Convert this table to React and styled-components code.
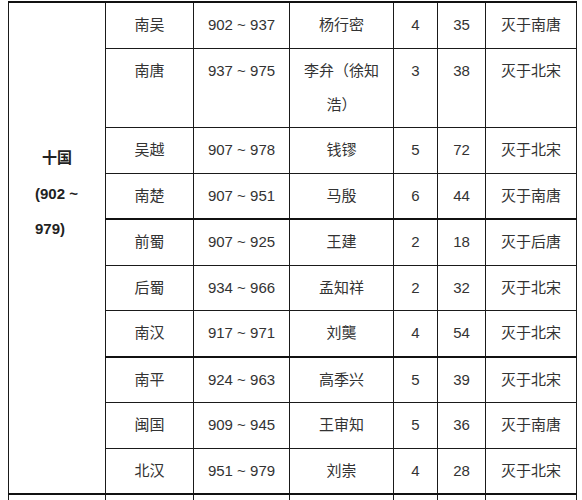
import React from "react";
import styled, { createGlobalStyle } from "styled-components";

const GlobalStyle = createGlobalStyle`
  body {
    margin: 1px 0 0 8px;
    background: #fff;
    font-family: "Liberation Sans", "Noto Sans CJK SC", sans-serif;
  }
`;

const Table = styled.table`
  border-collapse: collapse;
  table-layout: fixed;
  width: 568px;
  border-top: 2px solid #111;
  color: #333;
  font-size: 15px;
`;

const Row = styled.tr`
  & > td {
    border-top: ${(p) => (p.$sep ? "2px solid #111" : "1px solid #222")};
  }
`;

const Cell = styled.td`
  border: 1px solid #1a1a1a;
  text-align: center;
  vertical-align: top;
  padding: 5px 6px 5.5px;
  line-height: 34px;
  white-space: normal;
`;

const RegionCell = styled.td`
  border: 1px solid #1a1a1a;
  border-bottom: 2px solid #111;
  vertical-align: top;
  text-align: left;
  padding: 137px 0 0 26px;
  line-height: 35.5px;
  font-weight: bold;
  color: #222;
`;

const RegionText = styled.div`
  width: 44px;
`;

const RegionName = styled.div`
  text-align: center;
`;

const BlankRow = styled.tr`
  & > td {
    border-top: 2px solid #111;
    height: 34px;
  }
`;

const widths = [97, 88, 96, 104, 44, 48, 91];

const rows = [
  ["南吴", "902 ~ 937", "杨行密", "4", "35", "灭于南唐"],
  ["南唐", "937 ~ 975", "李弁（徐知浩）", "3", "38", "灭于北宋"],
  ["吴越", "907 ~ 978", "钱镠", "5", "72", "灭于北宋"],
  ["南楚", "907 ~ 951", "马殷", "6", "44", "灭于南唐"],
  ["前蜀", "907 ~ 925", "王建", "2", "18", "灭于后唐", true],
  ["后蜀", "934 ~ 966", "孟知祥", "2", "32", "灭于北宋"],
  ["南汉", "917 ~ 971", "刘龑", "4", "54", "灭于北宋"],
  ["南平", "924 ~ 963", "高季兴", "5", "39", "灭于北宋", true],
  ["闽国", "909 ~ 945", "王审知", "5", "36", "灭于南唐"],
  ["北汉", "951 ~ 979", "刘崇", "4", "28", "灭于北宋"],
];

export default function App() {
  return (
    <>
      <GlobalStyle />
      <Table>
        <colgroup>
          {widths.map((w, i) => (
            <col key={i} style={{ width: w }} />
          ))}
        </colgroup>
        <tbody>
          {rows.map((r, i) => (
            <Row key={r[0]} $sep={r[6]}>
              {i === 0 && (
                <RegionCell rowSpan={rows.length}>
                  <RegionText>
                    <RegionName>十国</RegionName>
                    (902 ~ 979)
                  </RegionText>
                </RegionCell>
              )}
              {r.slice(0, 6).map((v, j) => (
                <Cell key={j}>{v}</Cell>
              ))}
            </Row>
          ))}
          <BlankRow>
            {widths.map((w, i) => (
              <Cell key={i} />
            ))}
          </BlankRow>
        </tbody>
      </Table>
    </>
  );
}
